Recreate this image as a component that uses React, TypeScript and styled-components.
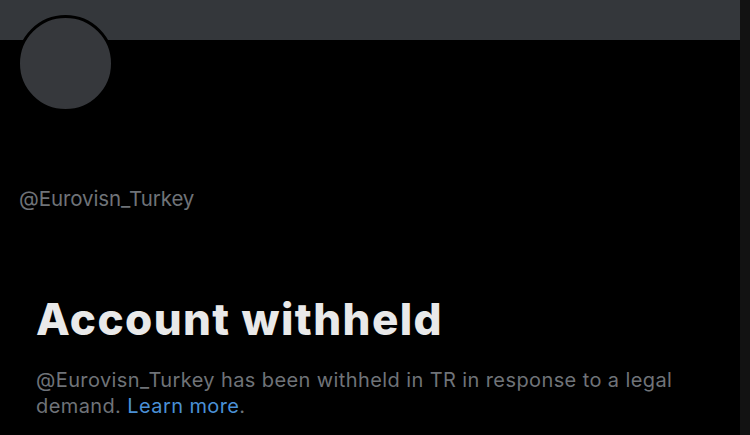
import styled, { createGlobalStyle } from "styled-components";

const GlobalStyle = createGlobalStyle`
  html, body {
    margin: 0;
    padding: 0;
    background: #000;
  }
  body {
    font-family: Inter, "Liberation Sans", Arial, sans-serif;
  }
`;

export default function App() {
  return (
    <>
      <GlobalStyle />
      <Page>
        <Main>
          <Banner />
          <Avatar />
          <Handle>@Eurovisn_Turkey</Handle>
          <Notice>
            <Title>Account withheld</Title>
            <Text>
              @Eurovisn_Turkey has been withheld in TR in response to a legal
              <br />
              demand. <Link>Learn more</Link>.
            </Text>
          </Notice>
        </Main>
        <SideStrip />
      </Page>
    </>
  );
}

const Page = styled.div`
  width: 750px;
  height: 435px;
  display: flex;
  overflow: hidden;
  background: #000;
`;

const Main = styled.div`
  width: 740px;
  display: flex;
  flex-direction: column;
`;

const SideStrip = styled.div`
  width: 10px;
  background: #121212;
`;

const Banner = styled.div`
  height: 40px;
  background: #34373b;
`;

const Avatar = styled.div`
  width: 91px;
  height: 91px;
  margin: -25px 0 0 17px;
  border: 3px solid #000;
  border-radius: 50%;
  background: #36383c;
`;

const Handle = styled.p`
  margin: 75px 0 0 19px;
  font-size: 20.5px;
  line-height: 24px;
  color: #6f7378;
  letter-spacing: -0.1px;
`;

const Notice = styled.div`
  margin: 84px 0 0 36px;
  display: flex;
  flex-direction: column;
  gap: 24px;
`;

const Title = styled.h1`
  margin: 0;
  font-size: 44px;
  line-height: 48px;
  font-weight: 800;
  color: #e9e9e9;
  letter-spacing: 1.4px;
`;

const Text = styled.p`
  margin: 0;
  width: 690px;
  font-size: 20px;
  line-height: 26px;
  color: #6f7378;
  letter-spacing: 0.4px;
`;

const Link = styled.span`
  color: #4a90d6;
`;
